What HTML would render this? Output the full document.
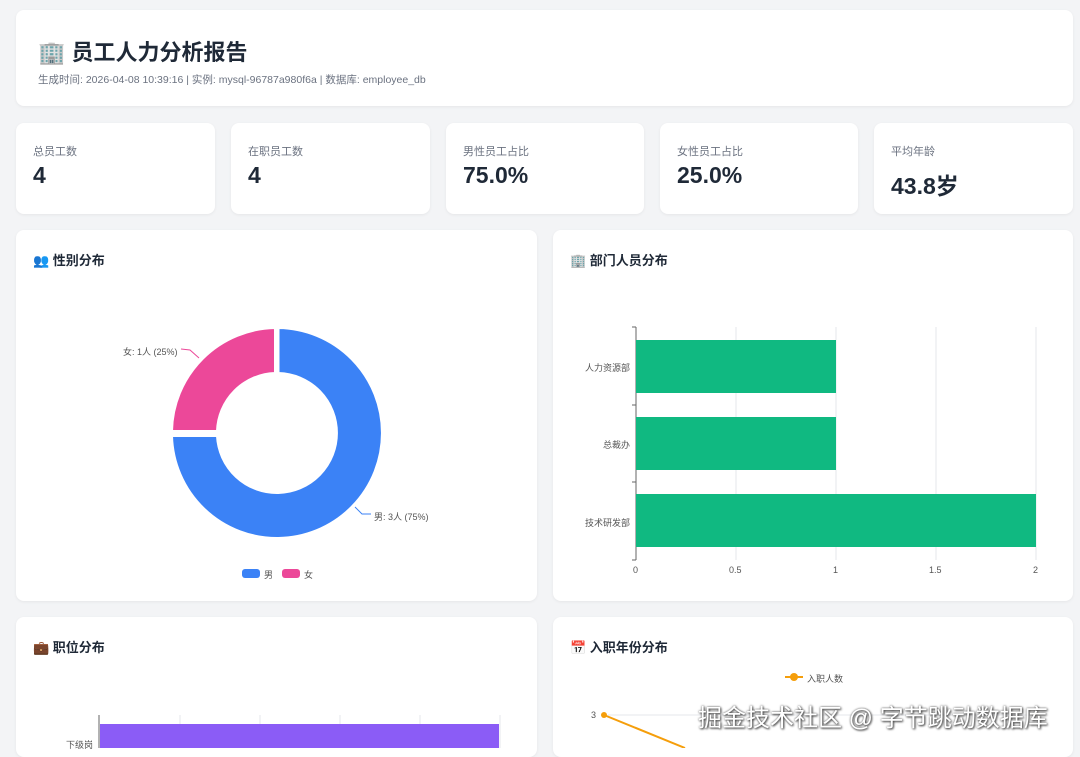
<!DOCTYPE html><html><head><meta charset="utf-8"><style>
*{box-sizing:border-box;margin:0;padding:0}
body{width:1080px;height:748px;overflow:hidden;background:#f3f4f6;font-family:"Liberation Sans","Noto Sans CJK SC",sans-serif;color:#1f2937;position:relative}
.card{position:absolute;background:#fff;border-radius:8px;box-shadow:0 1px 3px rgba(0,0,0,.06)}
.h1{position:absolute;left:22px;top:25px;font-size:22px;font-weight:bold}
.sub{position:absolute;left:22px;top:62px;font-size:10.5px;color:#6b7280}
.sl{position:absolute;left:17px;top:20px;font-size:11px;color:#6b7280}
.sv{position:absolute;left:17px;top:39px;font-size:23px;font-weight:bold}
.ct{position:absolute;left:17px;top:20px;font-size:13px;font-weight:bold}
.t{position:absolute;font-size:9px;color:#555}
</style></head><body>
<div class="card" style="left:16px;top:10px;width:1057px;height:96px">
<div class="h1">🏢 员工人力分析报告</div>
<div class="sub">生成时间: 2026-04-08 10:39:16 | 实例: mysql-96787a980f6a | 数据库: employee_db</div></div>
<div class="card" style="left:16px;top:123px;width:199px;height:91px"><div class="sl">总员工数</div><div class="sv">4</div></div>
<div class="card" style="left:231px;top:123px;width:199px;height:91px"><div class="sl">在职员工数</div><div class="sv">4</div></div>
<div class="card" style="left:446px;top:123px;width:198px;height:91px"><div class="sl">男性员工占比</div><div class="sv">75.0%</div></div>
<div class="card" style="left:660px;top:123px;width:198px;height:91px"><div class="sl">女性员工占比</div><div class="sv">25.0%</div></div>
<div class="card" style="left:874px;top:123px;width:199px;height:91px"><div class="sl">平均年龄</div><div class="sv" style="top:44px">43.8岁</div></div>

<div class="card" style="left:16px;top:230px;width:521px;height:371px"><div class="ct">👥 性别分布</div></div>
<div class="card" style="left:553px;top:230px;width:520px;height:371px"><div class="ct">🏢 部门人员分布</div></div>
<div class="card" style="left:16px;top:617px;width:521px;height:140px"><div class="ct" style="top:20px">💼 职位分布</div></div>
<div class="card" style="left:553px;top:617px;width:520px;height:140px"><div class="ct" style="top:20px">📅 入职年份分布</div></div>

<svg style="position:absolute;left:0;top:0" width="1080" height="748">
<path d="M278.5 328 A105 105 0 1 1 172 436 L217 436 A60 60 0 1 0 278.5 373 Z" fill="#3b82f6" stroke="#fff" stroke-width="2"/>
<path d="M172 431 A105 105 0 0 1 275 328 L275 373 A60 60 0 0 0 217 431 Z" fill="#ec4899" stroke="#fff" stroke-width="2"/>
<polyline points="181,349 190,350 199,358" fill="none" stroke="#ec4899"/>
<polyline points="355,507 362,514 371,514" fill="none" stroke="#3b82f6"/>
<rect x="242" y="569" width="18" height="9" rx="3" fill="#3b82f6"/>
<rect x="282" y="569" width="18" height="9" rx="3" fill="#ec4899"/>
<g stroke="#e5e7eb"><line x1="736" y1="327" x2="736" y2="560"/><line x1="836" y1="327" x2="836" y2="560"/><line x1="936" y1="327" x2="936" y2="560"/><line x1="1036" y1="327" x2="1036" y2="560"/></g>
<line x1="636" y1="327" x2="636" y2="560" stroke="#666"/>
<g stroke="#666"><line x1="632" y1="327" x2="636" y2="327"/><line x1="632" y1="405" x2="636" y2="405"/><line x1="632" y1="482" x2="636" y2="482"/><line x1="632" y1="560" x2="636" y2="560"/></g>
<rect x="636" y="340" width="200" height="53" fill="#10b981"/>
<rect x="636" y="417" width="200" height="53" fill="#10b981"/>
<rect x="636" y="494" width="400" height="53" fill="#10b981"/>
<g stroke="#e5e7eb"><line x1="180" y1="715" x2="180" y2="748"/><line x1="260" y1="715" x2="260" y2="748"/><line x1="340" y1="715" x2="340" y2="748"/><line x1="420" y1="715" x2="420" y2="748"/><line x1="500" y1="715" x2="500" y2="748"/></g>
<line x1="99" y1="715" x2="99" y2="748" stroke="#666"/>
<rect x="100" y="724" width="399" height="24" fill="#8b5cf6"/>
<line x1="608" y1="715" x2="1036" y2="715" stroke="#e5e7eb"/>
<line x1="785" y1="677" x2="803" y2="677" stroke="#f59e0b" stroke-width="2"/><circle cx="794" cy="677" r="4" fill="#f59e0b"/>
<line x1="604" y1="715" x2="685" y2="748" stroke="#f59e0b" stroke-width="2"/><circle cx="604" cy="715" r="3" fill="#f59e0b"/>
</svg>
<div class="t" style="left:123px;top:345px">女: 1人 (25%)</div>
<div class="t" style="left:374px;top:510px">男: 3人 (75%)</div>
<div class="t" style="left:264px;top:568px">男</div><div class="t" style="left:304px;top:568px">女</div>
<div class="t" style="left:585px;top:361px">人力资源部</div>
<div class="t" style="left:603px;top:438px">总裁办</div>
<div class="t" style="left:585px;top:516px">技术研发部</div>
<div class="t" style="left:633px;top:565px">0</div><div class="t" style="left:729px;top:565px">0.5</div><div class="t" style="left:833px;top:565px">1</div><div class="t" style="left:929px;top:565px">1.5</div><div class="t" style="left:1033px;top:565px">2</div>
<div class="t" style="left:807px;top:672px">入职人数</div>
<div class="t" style="left:591px;top:710px">3</div>
<div class="t" style="left:66px;top:738px">下级岗</div>
<div style="position:absolute;left:698px;top:698px;font-size:24px;color:#fff;text-shadow:0 0 2px #555,1px 1px 2px #333;white-space:nowrap">掘金技术社区 @ 字节跳动数据库</div>
</body></html>
